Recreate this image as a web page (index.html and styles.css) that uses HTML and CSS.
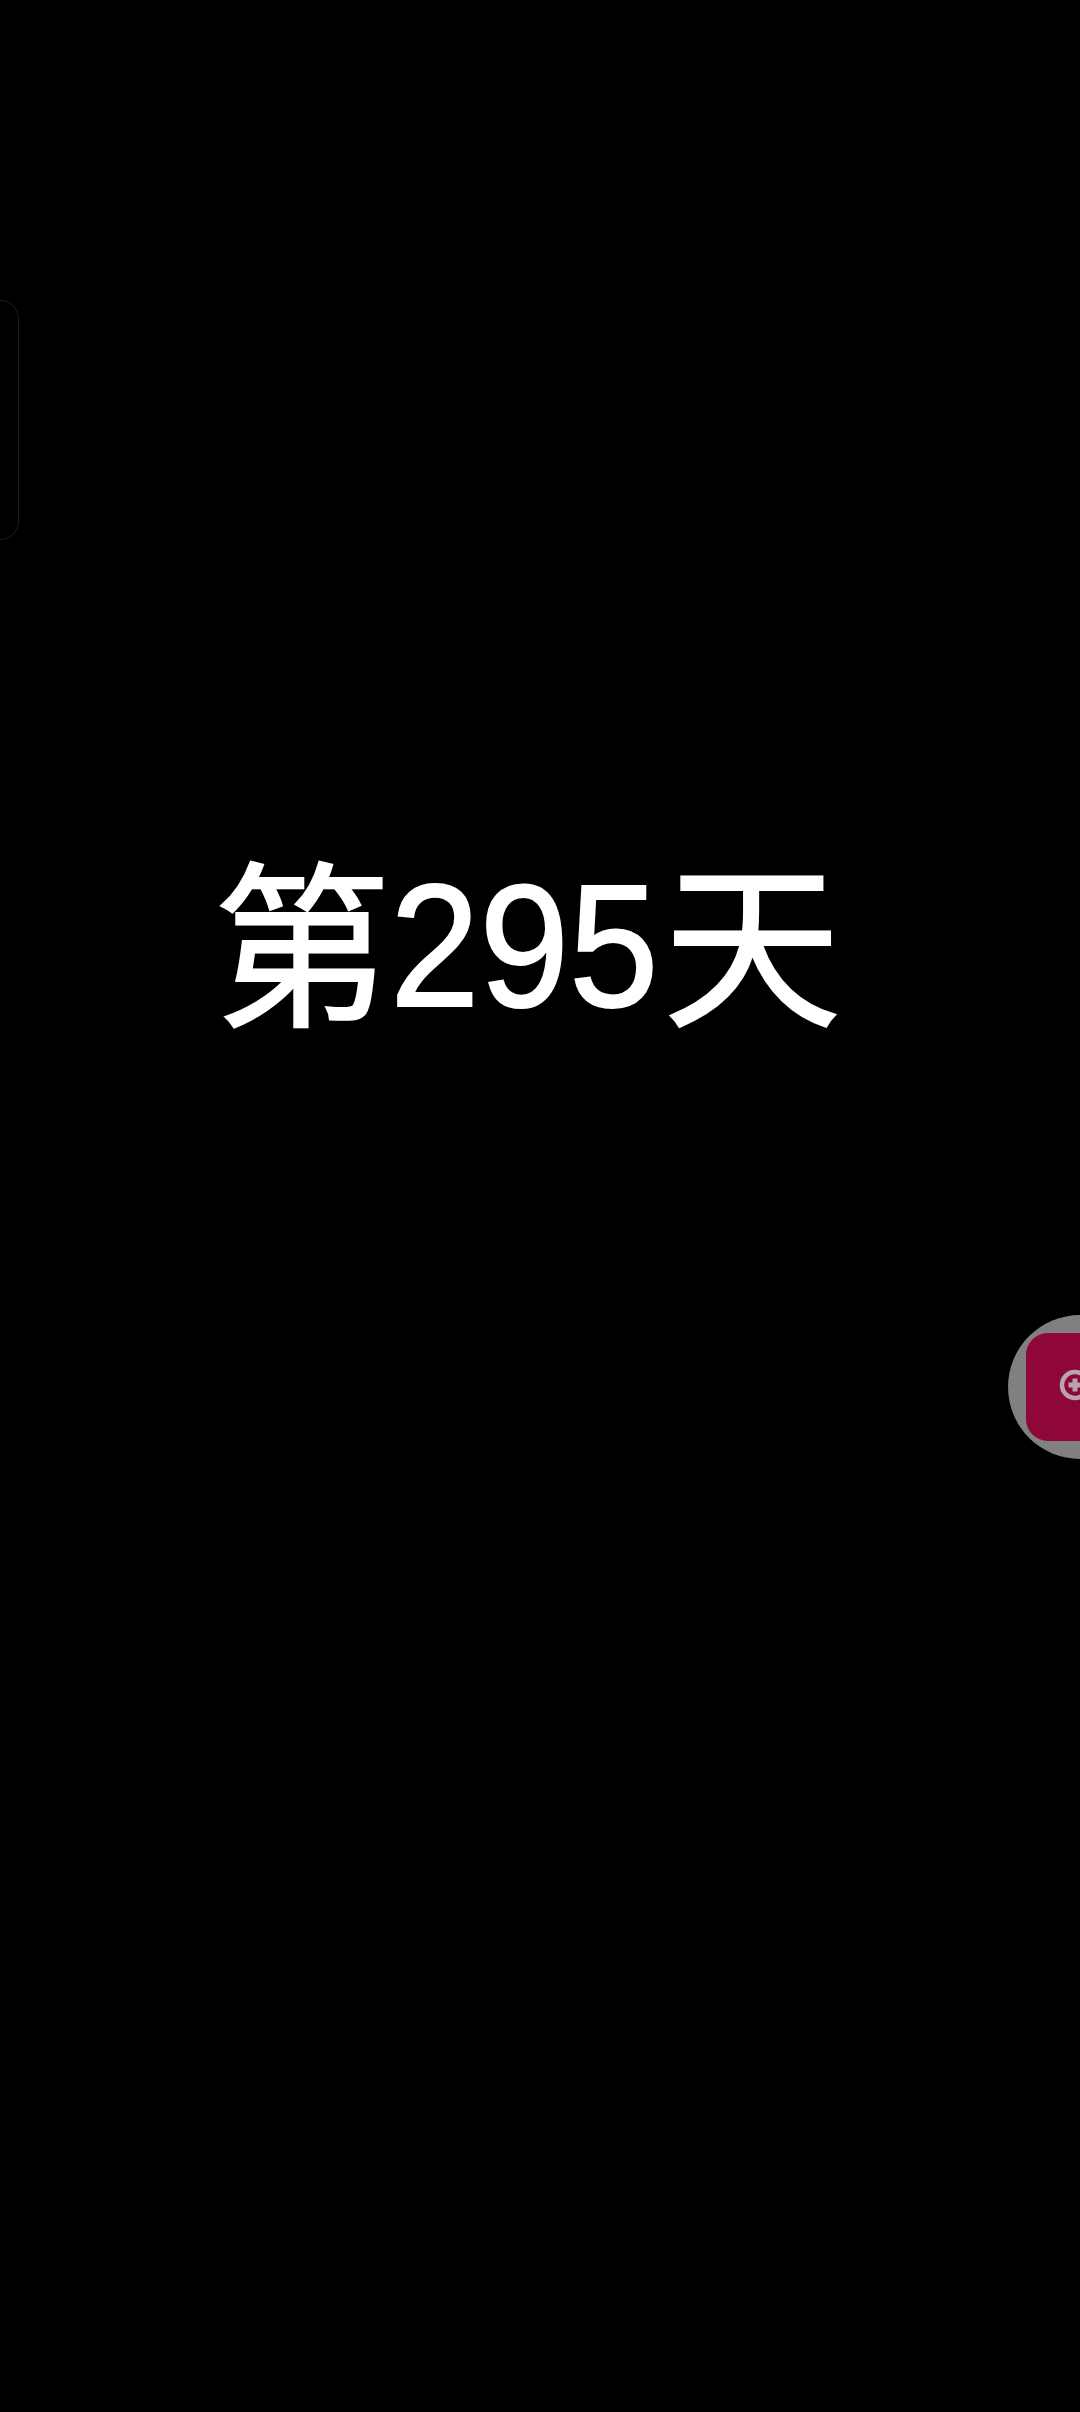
FILE: index.html
```html
<!DOCTYPE html>
<html lang="zh">
<head>
<meta charset="utf-8">
<title>第295天</title>
<link rel="stylesheet" href="styles.css">
</head>
<body>
<main class="stage">
  <h1 class="title"><span class="han">第</span><span class="digits">295</span><span class="han">天</span></h1>
</main>
<div class="edge-panel"></div>
<div class="float-ball">
  <div class="float-card">
    <svg class="float-icon" viewBox="0 0 22 34" width="22" height="34">
      <circle cx="17" cy="17" r="13" fill="none" stroke="#b9a3ad" stroke-width="4.5"/>
      <path d="M17 10.5v13M10.5 17h11.5" stroke="#b9a3ad" stroke-width="5"/>
    </svg>
  </div>
</div>
</body>
</html>
```
FILE: styles.css
```css
html, body {
  margin: 0;
  padding: 0;
  background: #000;
}
body {
  width: 1080px;
  height: 2412px;
  overflow: hidden;
  position: relative;
}
.stage {
  display: flex;
  justify-content: flex-start;
  padding: 836px 0 0 213px;
}
.title {
  margin: 0;
  color: #fff;
  font-family: "Liberation Sans", "Noto Sans CJK SC", sans-serif;
  font-weight: 400;
  line-height: 220px;
  white-space: nowrap;
  -webkit-text-stroke: 2px #fff;
}
.han {
  font-size: 178px;
  vertical-align: -7px;
}
.digits {
  display: inline-block;
  font-size: 174px;
  margin-left: -1px;
  margin-right: -17px;
  transform: scaleX(0.925);
  transform-origin: left center;
}
.edge-panel {
  position: absolute;
  left: 0;
  top: 300px;
  width: 18px;
  height: 238px;
  border: 1px solid #1c1e1e;
  border-left: 0;
  border-radius: 0 20px 20px 0;
}
.float-ball {
  position: absolute;
  right: 0;
  top: 1315px;
  width: 72px;
  height: 144px;
  border-radius: 72px 0 0 72px;
  background: #808080;
  display: flex;
  align-items: center;
  justify-content: flex-end;
}
.float-card {
  width: 54px;
  height: 108px;
  border-radius: 22px 0 0 22px;
  background: #8f0638;
  display: flex;
  align-items: center;
  justify-content: flex-end;
}
.float-icon {
  flex: none;
  margin-top: -4px;
}
```
